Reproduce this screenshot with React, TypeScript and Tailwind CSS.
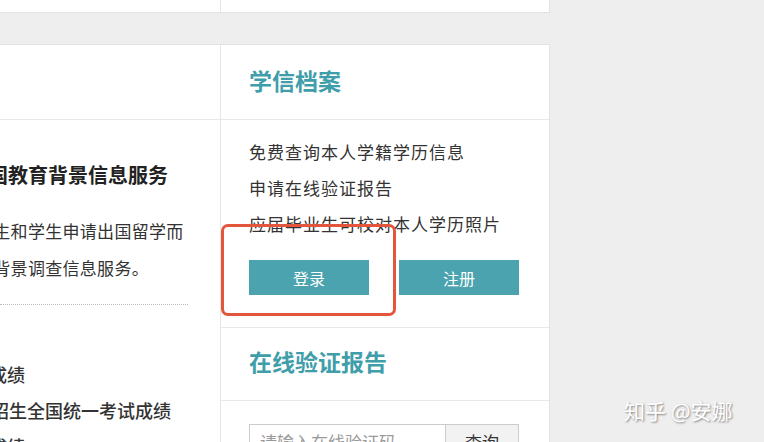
import React from 'react';

const font = { fontFamily: '"Noto Sans CJK SC", "Noto Sans", sans-serif' };

const rightItems = ['免费查询本人学籍学历信息', '申请在线验证报告', '应届毕业生可校对本人学历照片'];

const App: React.FC = () => {
  return (
    <div className="relative w-[764px] h-[442px] bg-[#eeeeee] overflow-hidden text-[#333]" style={font}>
      {/* top panel tail */}
      <div className="flex w-[550px] h-[13px] bg-white border-b border-r border-[#e2e2e2]">
        <div className="w-[221px] border-r border-[#e6e6e6]" />
        <div className="flex-1" />
      </div>

      {/* main panel */}
      <div className="mt-[31px] w-[550px] h-[420px] bg-white border-t border-r border-[#e2e2e2] flex flex-col">
        <div className="flex h-[76px] border-b border-[#e8e8e8]">
          <div className="w-[221px] border-r border-[#e6e6e6]" />
          <div className="flex-1 flex items-center pl-[28px] pb-[4px]">
            <h2 className="text-[23px] font-bold text-[#3f9eaa] leading-none">学信档案</h2>
          </div>
        </div>

        <div className="flex flex-1">
          {/* left column, cut at the window edge */}
          <div className="w-[221px] border-r border-[#e6e6e6] overflow-hidden">
            <div className="pt-[40px] pr-[32px]">
              <div className="ml-[-32px] whitespace-nowrap text-[20px] font-bold leading-[30px] text-[#222]">
                出国教育背景信息服务
              </div>
              <div className="mt-[22px] text-[17px] leading-[37px] tracking-[0.3px] text-[#333]">
                <div className="ml-[-24px] whitespace-nowrap">业生和学生申请出国留学而</div>
                <div className="ml-[-24px] whitespace-nowrap">育背景调查信息服务。</div>
              </div>
              <div className="mt-[18px] border-t border-dotted border-[#bbb]" />
              <div className="mt-[51px] text-[18px] leading-[36px] font-medium text-[#333]">
                <div className="ml-[-47px] whitespace-nowrap">考试成绩</div>
                <div className="ml-[-45px] whitespace-nowrap">学校招生全国统一考试成绩</div>
                <div className="ml-[-47px] whitespace-nowrap">考试成绩</div>
              </div>
            </div>
          </div>

          {/* right column */}
          <div className="flex-1 flex flex-col">
            <div className="pl-[28px] pt-[14px] pb-[32px] border-b border-[#e8e8e8]">
              <ul className="text-[17px] leading-[36px] tracking-[1px]">
                {rightItems.map((t) => (
                  <li key={t} className="whitespace-nowrap">{t}</li>
                ))}
              </ul>
              <div className="mt-[18px] flex gap-[30px]">
                <button className="w-[120px] h-[35px] bg-[#4aa3ae] text-white text-[16px]">登录</button>
                <button className="w-[120px] h-[35px] bg-[#4aa3ae] text-white text-[16px]">注册</button>
              </div>
            </div>
            <div className="h-[73px] flex items-center pl-[28px] pb-[5px] border-b border-[#e8e8e8]">
              <h2 className="text-[23px] font-bold text-[#3f9eaa] leading-none">在线验证报告</h2>
            </div>
            <div className="pl-[28px] pt-[23px] flex">
              <div className="w-[197px] h-[36px] border border-[#cccccc] flex items-center pl-[10px] text-[17px] text-[#999] whitespace-nowrap overflow-hidden">
                请输入在线验证码
              </div>
              <button className="w-[73px] h-[36px] border border-l-0 border-[#cccccc] bg-[#f2f2f2] text-[17px] text-[#333]">
                查询
              </button>
            </div>
          </div>
        </div>
      </div>

      {/* red annotation */}
      <div className="absolute left-[221px] top-[224px] w-[175px] h-[92px] border-[3px] border-[#e4553d] rounded-[7px]" />

      {/* watermark */}
      <div className="absolute left-[624px] top-[395px] text-[21px] text-white whitespace-nowrap [text-shadow:1px_1px_2px_rgba(0,0,0,0.45)]">
        知乎 @安娜
      </div>
    </div>
  );
};

export default App;
